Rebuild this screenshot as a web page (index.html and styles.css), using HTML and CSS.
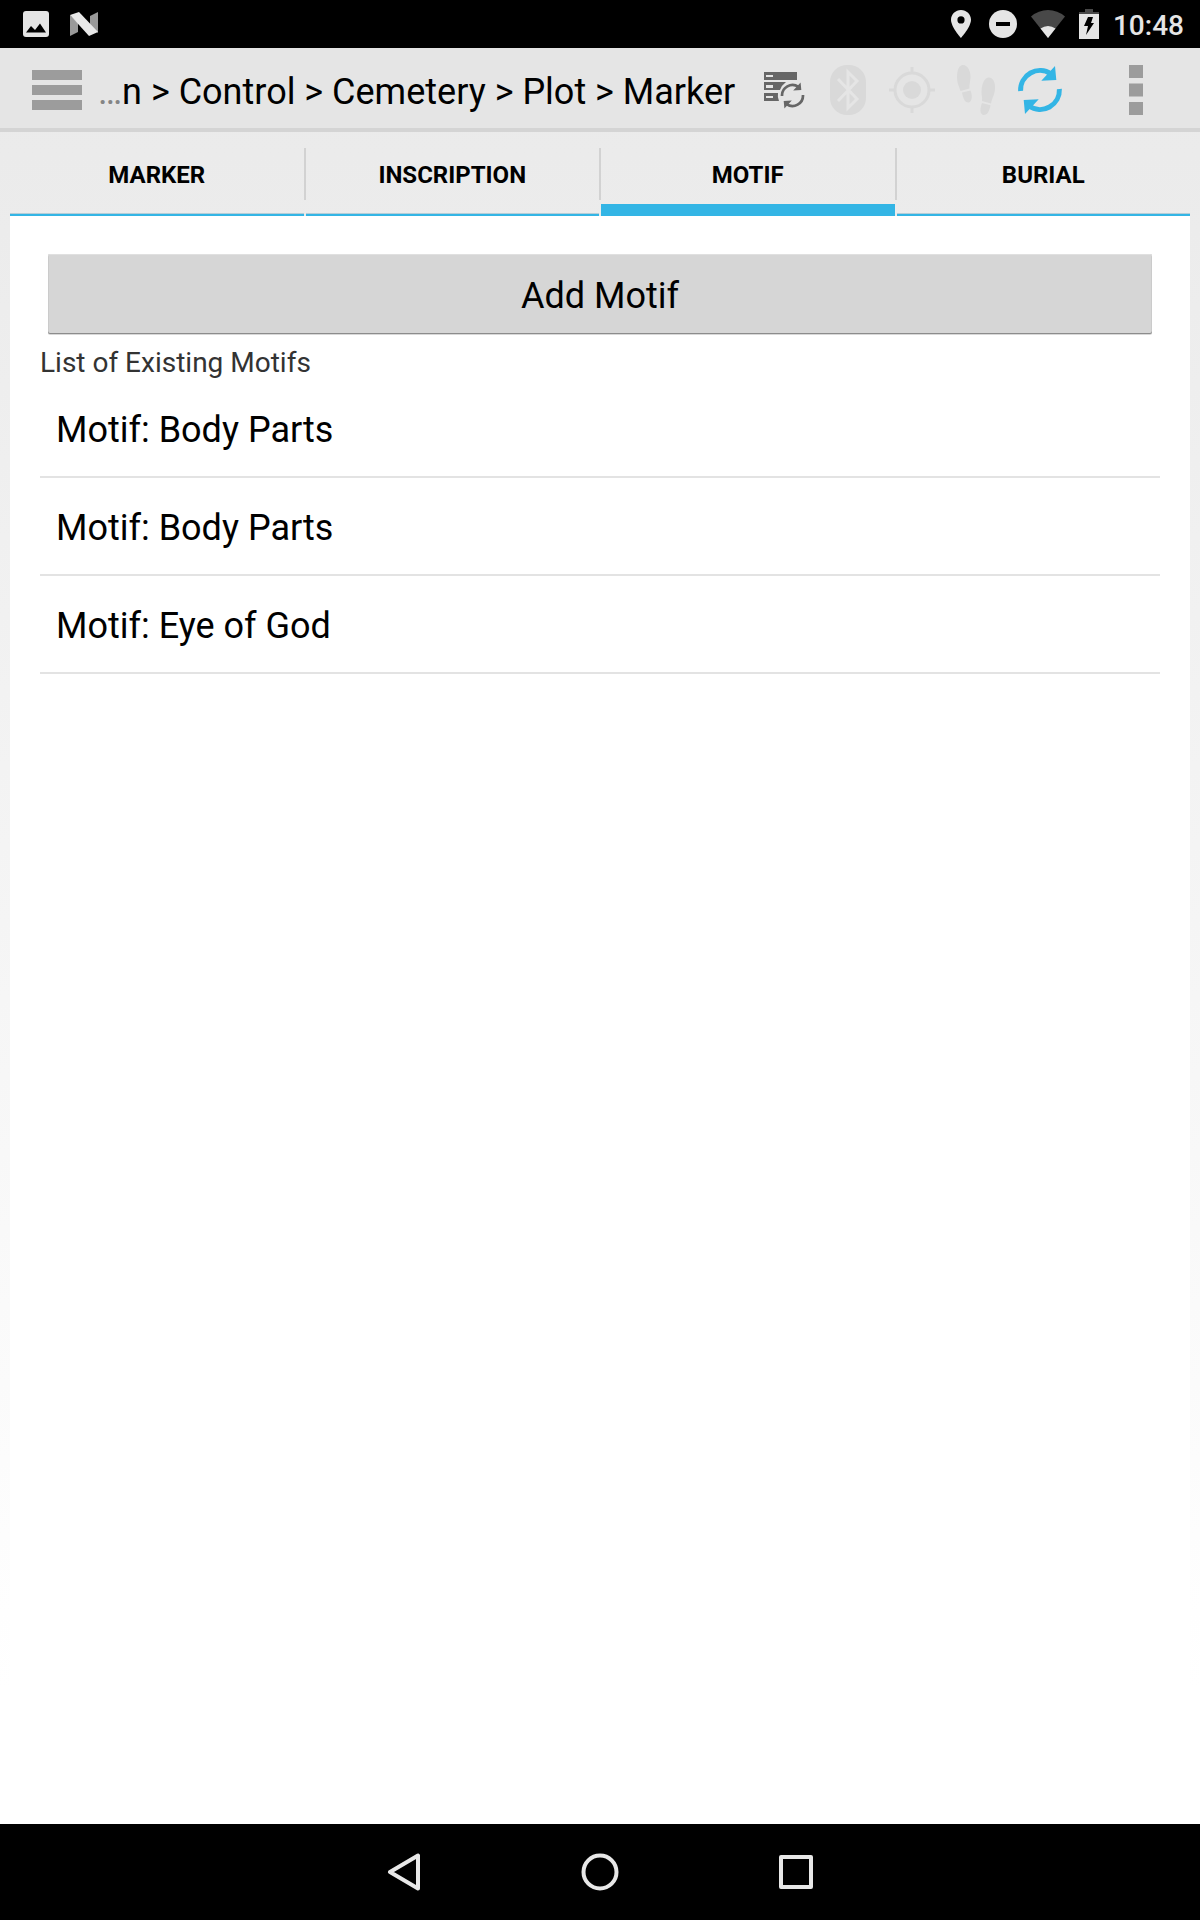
FILE: index.html
```html
<!DOCTYPE html>
<html lang="en">
<head>
<meta charset="utf-8">
<meta name="viewport" content="width=device-width, initial-scale=1">
<title>Marker</title>
<link rel="stylesheet" href="styles.css">
</head>
<body>
<svg class="defs" width="0" height="0" aria-hidden="true">
  <symbol id="sync" viewBox="0 0 50 50">
    <path d="M5.600 26A19.400 19.400 0 0 1 36 9M44.400 24A19.400 19.400 0 0 1 14 41" fill="none" stroke="currentColor" stroke-width="5"/>
    <path d="M40 1l1.300 14-15 .7zM10 49l-1.300-14 15-.7z" fill="currentColor"/>
  </symbol>
</svg>

<div class="status-bar">
  <div class="status-group status-group--left">
    <svg width="26" height="26" viewBox="0 0 26 26" aria-hidden="true"><rect width="26" height="26" rx="3" fill="#e5e5e5"/><path d="M3 21.500l5-6.500 4 4 5-6.500 6 9z"/></svg>
    <svg width="28" height="24" viewBox="0 0 28 24" aria-hidden="true"><path d="M0 3l8 8v9l-8 4zM20 4l8-4v21l-8-8z" fill="#999"/><path d="M0 3l9-3 19 20-9 4z" fill="#e8e8e8"/></svg>
  </div>
  <div class="status-group">
    <svg class="pin" width="20" height="28" viewBox="0 0 20 28" aria-hidden="true"><path fill="#e5e5e5" fill-rule="evenodd" d="M10 0C4.500 0 0 4.400 0 9.800 0 17 10 28 10 28s10-11 10-18.200C20 4.400 15.500 0 10 0zm0 6.300a3.600 3.600 0 1 1 0 7.200 3.600 3.600 0 0 1 0-7.200z"/></svg>
    <svg width="28" height="28" viewBox="0 0 28 28" aria-hidden="true"><circle cx="14" cy="14" r="14" fill="#e5e5e5"/><path d="M7 12h14v4H7z"/></svg>
    <svg width="34" height="28" viewBox="0 0 34 28" aria-hidden="true"><path d="M17 28L0 6.500Q7.500 0 17 0t17 6.500z" fill="#484848"/><path d="M17 28L9.500 18.500Q13 16 17 16t7.500 2.500z" fill="#e5e5e5"/></svg>
    <svg width="20" height="30" viewBox="0 0 20 30" aria-hidden="true"><path d="M6 0h8v3h6v3H0V3h6z" fill="#484848"/><path d="M0 5h20v25H0z" fill="#e5e5e5"/><path d="M9 8h5l-2 6h3L7 26l2-9H5z"/></svg>
    <time class="clock">10:48</time>
  </div>
</div>

<header class="app-bar">
  <button class="menu-button" type="button" aria-label="Open menu"><svg width="50" height="40" viewBox="0 0 50 40"><path d="M0 0h50v10H0zM0 15h50v10H0zM0 30h50v10H0z" fill="#9c9c9c"/></svg></button>
  <h1 class="title"><span class="title-ellipsis">…</span>n &gt; Control &gt; Cemetery &gt; Plot &gt; Marker</h1>
  <div class="actions">
    <button class="action action--server" type="button" aria-label="Sync server">
      <svg width="50" height="50" viewBox="0 0 50 50">
        <path fill="currentColor" fill-rule="evenodd" d="M5 7h33v8H5zM7 10v2h7v-2zM5 17h22a17 17 0 0 0-6 8H5zM7 20v3h7v-3zM5 28h14a14 14 0 0 0 1 8H5zM7 31v2h7v-2z"/>
        <use href="#sync" x="20" y="17" width="27" height="27"/>
      </svg>
    </button>
    <button class="action" type="button" aria-label="Bluetooth">
      <svg width="50" height="50" viewBox="0 0 50 50"><rect x="7" width="36" height="50" rx="17" fill="currentColor"/><path d="M15 14l19 20-9 9V7l9 9-19 20" fill="none" stroke="#e5e5e5" stroke-width="3"/></svg>
    </button>
    <button class="action" type="button" aria-label="Location">
      <svg width="50" height="50" viewBox="0 0 50 50"><circle cx="25" cy="25" r="9" fill="currentColor"/><path d="M25 2v6M25 42v6M2 25h6M42 25h6" stroke="currentColor" stroke-width="3"/><circle cx="25" cy="25" r="17" fill="none" stroke="currentColor" stroke-width="3"/></svg>
    </button>
    <button class="action" type="button" aria-label="Track">
      <svg width="50" height="50" viewBox="0 0 50 50"><path fill="currentColor" d="M12 0C17 0 20 7 19.500 13c-.3 4-1.500 7-1 10.500L9.500 26C8 21 6 18 6 12 6 5 8 0 12 0zM11 27.500l8.500-2c2 5 2 11-2 12-4 0-5.500-5-6.500-10zM38 12.500c4 0 6.500 5 6 11.500-.4 6-3 9-4 14.500L31 36c.5-4-.7-6-.5-10C31 19 33 12.500 38 12.500zM31 38l8.500 2.200C38.500 45 37 50 32.500 50c-4-.5-3.500-7-1.500-12z"/></svg>
    </button>
    <button class="action action--refresh" type="button" aria-label="Refresh">
      <svg width="50" height="50" viewBox="0 0 50 50"><use href="#sync" width="50" height="50"/></svg>
    </button>
    <button class="action action--more" type="button" aria-label="More options">
      <svg width="14" height="50" viewBox="0 0 14 50"><path d="M0 0h14v13H0zM0 18.500h14v13H0zM0 37h14v13H0z" fill="currentColor"/></svg>
    </button>
  </div>
</header>

<main class="page">
  <div class="tabs" role="tablist">
    <button class="tab" type="button" role="tab" aria-selected="false">MARKER</button>
    <button class="tab" type="button" role="tab" aria-selected="false">INSCRIPTION</button>
    <button class="tab" type="button" role="tab" aria-selected="true">MOTIF</button>
    <button class="tab" type="button" role="tab" aria-selected="false">BURIAL</button>
  </div>
  <section class="panel" role="tabpanel">
    <button class="add-button" type="button">Add Motif</button>
    <h2 class="list-label">List of Existing Motifs</h2>
    <ul class="motif-list">
      <li class="motif">Motif: Body Parts</li>
      <li class="motif">Motif: Body Parts</li>
      <li class="motif">Motif: Eye of God</li>
    </ul>
  </section>
</main>

<nav class="nav-bar" aria-label="System">
  <button class="nav-button" type="button" aria-label="Back"><svg width="38" height="38" viewBox="0 0 38 38"><path d="M33 2.500v33L5 19z"/></svg></button>
  <button class="nav-button" type="button" aria-label="Home"><svg width="38" height="38" viewBox="0 0 38 38"><circle cx="19" cy="19" r="16.500"/></svg></button>
  <button class="nav-button" type="button" aria-label="Recent apps"><svg width="38" height="38" viewBox="0 0 38 38"><rect x="4" y="4" width="30" height="30"/></svg></button>
</nav>
</body>
</html>
```
FILE: styles.css
```css
* { box-sizing: border-box; }

body {
  margin: 0;
  min-height: 100vh;
  display: flex;
  flex-direction: column;
  font-family: Roboto, "Liberation Sans", sans-serif;
  color: #000;
  background: linear-gradient(#e9e9e9, #fff 88%);
}

button {
  margin: 0;
  padding: 0;
  border: 0;
  background: none;
  font: inherit;
  color: inherit;
  cursor: pointer;
}

svg { display: block; flex: none; }
.defs { position: absolute; }

.status-bar {
  display: flex;
  justify-content: space-between;
  height: 48px;
  padding: 0 16px 0 23px;
  background: #000;
}

.status-group {
  display: flex;
  align-items: center;
  gap: 14px;
}

.status-group--left { gap: 21px; }

.pin { margin-right: 4px; }

.clock {
  padding-top: 2px;
  font-size: 28px;
  font-weight: 500;
  color: #e5e5e5;
}

.app-bar {
  display: flex;
  align-items: center;
  height: 84px;
  padding-left: 32px;
  background: #e5e5e5;
  box-shadow: inset 0 -4px #d4d4d4;
}

.title {
  flex: 1;
  min-width: 0;
  margin: 0;
  padding: 4px 0 0 16px;
  overflow: hidden;
  white-space: nowrap;
  font-size: 36px;
  font-weight: 400;
}

.title-ellipsis { color: #858585; }

.actions { display: flex; flex: none; }

.action {
  display: flex;
  align-items: center;
  justify-content: center;
  width: 64px;
  height: 84px;
  color: #d9d9d9;
}

.action--server { color: #666; }
.action--refresh { color: #33b5e5; }
.action--more { width: 128px; color: #9c9c9c; }

.page {
  flex: 1;
  display: flex;
  flex-direction: column;
  padding: 0 10px;
}

.tabs {
  display: grid;
  grid-template-columns: repeat(4, 1fr);
  gap: 2px;
  height: 84px;
}

.tab {
  position: relative;
  padding-top: 2px;
  font-size: 24px;
  font-weight: 700;
  box-shadow: inset 0 -2px #33b5e5, inset 0 -3px #b5cdd7;
}

.tab[aria-selected="true"] { box-shadow: inset 0 -12px #33b5e5; }

.tab + .tab::before {
  content: "";
  position: absolute;
  top: 16px;
  bottom: 16px;
  left: -2px;
  width: 2px;
  background: #d2d2d2;
}

.panel {
  flex: 1;
  display: flex;
  flex-direction: column;
  padding: 38px 30px;
  background: #fff;
}

.add-button {
  height: 80px;
  margin: 0 8px;
  padding-top: 4px;
  border-radius: 2px;
  font-size: 36px;
  background: #d6d6d6;
  box-shadow: inset 0 -1px #8c8c8c, inset 0 1px #e0e0e0, inset 0 0 0 1px #cbcbcb, 0 1px #d8d8d8;
}

.list-label {
  margin: 12px 0 0;
  font-size: 28px;
  font-weight: 400;
  line-height: 34px;
  color: #333;
}

.motif-list {
  margin: 0;
  padding: 0;
  list-style: none;
}

.motif {
  display: flex;
  align-items: center;
  height: 98px;
  padding: 4px 16px 0;
  border-bottom: 2px solid #e3e3e3;
  font-size: 36px;
}

.nav-bar {
  display: flex;
  justify-content: center;
  align-items: center;
  height: 96px;
  background: #000;
}

.nav-button {
  display: flex;
  align-items: center;
  justify-content: center;
  width: 196px;
  height: 96px;
}

.nav-button svg {
  fill: none;
  stroke: #e8e8e8;
  stroke-width: 4;
  stroke-linejoin: round;
}
```
